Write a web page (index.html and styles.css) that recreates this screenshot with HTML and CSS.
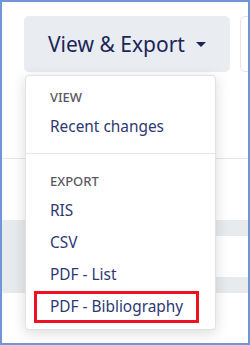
FILE: index.html
```html
<!DOCTYPE html>
<html lang="en">
<head>
  <meta charset="UTF-8">
  <title>View &amp; Export</title>
  <link rel="stylesheet" href="styles.css">
</head>
<body>
  <div class="frame">
    <div class="toolbar">
      <div class="menu-wrap">
        <button class="btn-export">View &amp; Export <span class="caret"></span></button>
        <div class="menu">
          <div class="menu-head">View</div>
          <div class="menu-item">Recent changes</div>
          <div class="menu-divider"></div>
          <div class="menu-head export">Export</div>
          <div class="menu-item">RIS</div>
          <div class="menu-item">CSV</div>
          <div class="menu-item">PDF - List</div>
          <div class="menu-item highlight">PDF - Bibliography</div>
        </div>
      </div>
      <div class="btn-next"></div>
    </div>

    <div class="table">
      <div class="row-top"></div>
      <div class="row-blank"></div>
      <div class="band"></div>
      <div class="row-mid"><div class="cell-side"></div></div>
      <div class="band"></div>
    </div>
  </div>
</body>
</html>
```

FILE: styles.css
```css
body {
  margin: 0;
  font-family: 'Noto Sans', sans-serif;
  background: #fff;
}
.frame {
  width: 250px;
  height: 345px;
  box-sizing: border-box;
  border: 2px solid #7095d8;
  overflow: hidden;
  position: relative;
  background: #fff;
}
.toolbar {
  display: flex;
  gap: 10px;
  padding: 14px 0 0 22px;
  height: 56px;
}
.menu-wrap {
  position: relative;
  z-index: 2;
}
.btn-export {
  display: flex;
  align-items: center;
  height: 56px;
  padding: 0 24px;
  border: none;
  border-radius: 5px;
  background: #e9ecf0;
  color: #1b2658;
  font-family: 'Noto Sans', sans-serif;
  font-size: 21px;
  white-space: nowrap;
}
.caret {
  width: 0;
  height: 0;
  margin-left: 11px;
  border-left: 5px solid transparent;
  border-right: 5px solid transparent;
  border-top: 5px solid #1b2658;
}
.btn-next {
  flex: none;
  width: 60px;
  height: 54px;
  border: 1px solid #e1e5ea;
  border-radius: 5px;
  background: #fff;
}
.menu {
  position: absolute;
  top: calc(100% + 3px);
  left: 1px;
  width: 191px;
  box-sizing: border-box;
  padding: 11px 0 6px;
  background: #fff;
  border: 1px solid #e2e2e2;
  border-radius: 4px;
  box-shadow: 0 3px 14px rgba(0, 0, 0, 0.15);
}
.menu-head {
  padding-left: 24px;
  margin-bottom: 4px;
  font-size: 13px;
  line-height: 20px;
  font-weight: 500;
  text-transform: uppercase;
  color: #5a5863;
}
.menu-head.export {
  margin-top: 17px;
}
.menu-item {
  margin: 0 16px 0 8px;
  padding-left: 16px;
  height: 32px;
  font-size: 15.4px;
  line-height: 32px;
  color: #2c3872;
}
.menu-item.highlight {
  outline: 3px solid #ee1122;
  outline-offset: -3px;
}
.menu-divider {
  height: 1px;
  margin-top: 10px;
  background: #e6e6e6;
}
.table {
  display: flex;
  flex-direction: column;
}
.row-top {
  height: 86px;
  border-bottom: 1px solid #e4e7eb;
}
.row-blank {
  height: 61px;
}
.band {
  height: 16px;
  background: #e8ebee;
}
.row-mid {
  height: 41px;
  display: flex;
}
.cell-side {
  width: 23px;
  background: #e8ebee;
}
```
